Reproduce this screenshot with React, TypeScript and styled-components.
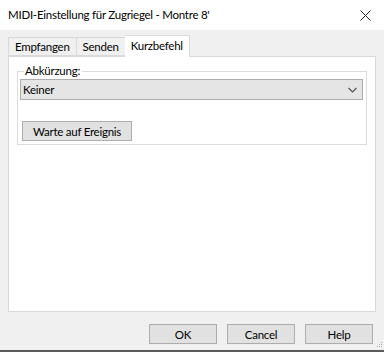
import styled, { createGlobalStyle } from 'styled-components'

const GlobalStyle = createGlobalStyle`
  html, body {
    margin: 0;
    padding: 0;
    background: #ffffff;
  }
  body {
    font-family: Lato, 'Noto Sans', sans-serif;
    font-size: 11.5px;
    letter-spacing: -0.25px;
    color: #000000;
  }
`

const Window = styled.div`
  width: 384px;
  height: 352px;
  box-sizing: border-box;
  display: flex;
  flex-direction: column;
  border-bottom: 2px solid #5a5a5a;
  overflow: hidden;
`

const TitleBar = styled.div`
  height: 30px;
  flex-shrink: 0;
  display: flex;
  align-items: center;
  justify-content: space-between;
  padding: 0 13px 0 8px;
  background: #ffffff;
`

const Title = styled.span`
  line-height: 16px;
`

const Body = styled.div`
  flex: 1;
  background: #f0f0f0;
  display: flex;
  flex-direction: column;
  padding: 4px 8px 0 8px;
`

const TabStrip = styled.div`
  display: flex;
  align-items: flex-end;
  height: 22px;
`

const Tab = styled.div<{ $active?: boolean }>`
  box-sizing: border-box;
  height: ${(p) => (p.$active ? '22px' : '19px')};
  padding: ${(p) => (p.$active ? '0 6px 3px' : '0 6px')};
  margin: ${(p) => (p.$active ? '0 -1px -1px -1px' : '0')};
  display: flex;
  align-items: center;
  background: ${(p) => (p.$active ? '#ffffff' : '#f0f0f0')};
  border: 1px solid #d9d9d9;
  border-bottom: ${(p) => (p.$active ? 'none' : '1px solid #d9d9d9')};
  position: relative;
  z-index: ${(p) => (p.$active ? 1 : 0)};
  & + & {
    border-left: none;
  }
`

const Panel = styled.div`
  height: 256px;
  box-sizing: border-box;
  background: #ffffff;
  border: 1px solid #d9d9d9;
  padding: 7px 8px 0 8px;
`

const GroupBox = styled.fieldset`
  margin: 0;
  padding: 1px 3px 3px 2px;
  border: 1px solid #dcdcdc;
  box-sizing: border-box;
`

const Legend = styled.legend`
  padding: 0 2px 0 1px;
  margin-left: 4px;
  line-height: 14px;
`

const Combo = styled.div`
  height: 21px;
  box-sizing: border-box;
  display: flex;
  align-items: center;
  justify-content: space-between;
  padding: 0 5px 0 2px;
  background: #e5e5e5;
  border: 1px solid #adadad;
`

const Button = styled.div<{ $width?: number }>`
  box-sizing: border-box;
  width: ${(p) => (p.$width ? `${p.$width}px` : 'auto')};
  height: 20px;
  padding: 0 10px;
  display: flex;
  align-items: center;
  justify-content: center;
  background: #e1e1e1;
  border: 1px solid #adadad;
`

const WaitRow = styled.div`
  display: flex;
  margin-top: 21px;
  margin-left: 2px;
`

const Footer = styled.div`
  display: flex;
  justify-content: flex-end;
  gap: 10px;
  padding: 12px 3px 0 0;
  position: relative;
  flex: 1;
`

const Grip = styled.svg`
  position: absolute;
  right: -7px;
  bottom: 2px;
`

function App() {
  return (
    <>
      <GlobalStyle />
      <Window>
        <TitleBar>
          <Title>MIDI-Einstellung für Zugriegel - Montre 8'</Title>
          <svg width="11" height="11" viewBox="0 0 11 11">
            <path d="M0.5 0.5 L10.5 10.5 M10.5 0.5 L0.5 10.5" stroke="#222" strokeWidth="1" />
          </svg>
        </TitleBar>
        <Body>
          <TabStrip>
            <Tab>Empfangen</Tab>
            <Tab>Senden</Tab>
            <Tab $active>Kurzbefehl</Tab>
          </TabStrip>
          <Panel>
            <GroupBox>
              <Legend>Abkürzung:</Legend>
              <Combo>
                <span>Keiner</span>
                <svg width="9" height="6" viewBox="0 0 9 6">
                  <path d="M0.5 1 L4.5 5 L8.5 1" stroke="#555" strokeWidth="1.2" fill="none" />
                </svg>
              </Combo>
              <WaitRow>
                <Button>Warte auf Ereignis</Button>
              </WaitRow>
            </GroupBox>
          </Panel>
          <Footer>
            <Button $width={68}>OK</Button>
            <Button $width={68}>Cancel</Button>
            <Button $width={68}>Help</Button>
            <Grip width="6" height="6" viewBox="0 0 6 6">
              <rect x="4" y="0" width="1" height="1" fill="#b0b0b0" />
              <rect x="2" y="2" width="1" height="1" fill="#b0b0b0" />
              <rect x="4" y="2" width="1" height="1" fill="#b0b0b0" />
              <rect x="0" y="4" width="1" height="1" fill="#b0b0b0" />
              <rect x="2" y="4" width="1" height="1" fill="#b0b0b0" />
              <rect x="4" y="4" width="1" height="1" fill="#b0b0b0" />
            </Grip>
          </Footer>
        </Body>
      </Window>
    </>
  )
}

export default App
